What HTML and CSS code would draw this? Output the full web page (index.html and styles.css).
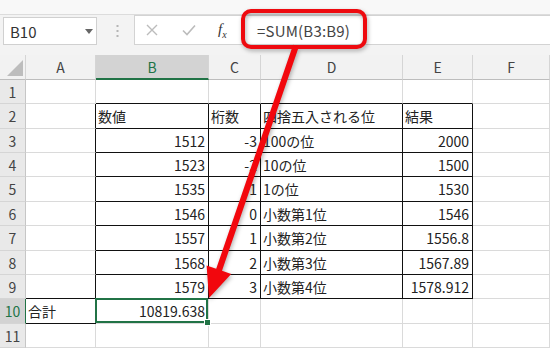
FILE: index.html
```html
<!DOCTYPE html>
<html lang="ja">
<head>
  <meta charset="UTF-8" />
  <title>SUM</title>
  <link rel="stylesheet" href="styles.css">
</head>
<body>
  <div class="ribbon"></div>

  <div class="formula-bar">
    <div class="name-box">
      <span>B10</span>
      <svg class="caret" width="8" height="5" viewBox="0 0 8 5"><path d="M0 0h8L4 5z" fill="#666"/></svg>
    </div>
    <svg class="grip" width="3" height="12" viewBox="0 0 3 12">
      <rect x="0.5" y="0" width="2" height="2" fill="#b5b5b5"/>
      <rect x="0.5" y="5" width="2" height="2" fill="#b5b5b5"/>
      <rect x="0.5" y="10" width="2" height="2" fill="#b5b5b5"/>
    </svg>
    <div class="formula-input">
      <div class="fx-buttons">
        <svg class="btn" width="12" height="12" viewBox="0 0 12 12"><path d="M1 1l10 10M11 1L1 11" stroke="#bcbcbc" stroke-width="1.4" fill="none"/></svg>
        <svg class="btn" width="14" height="12" viewBox="0 0 14 12"><path d="M1 6.5l4 4L13 1.5" stroke="#bcbcbc" stroke-width="1.6" fill="none"/></svg>
        <span class="fx">f<sub>x</sub></span>
      </div>
      <div class="formula">=SUM(B3:B9)</div>
    </div>
  </div>

  <table class="sheet">
    <colgroup>
      <col class="w-rh"><col class="w-a"><col class="w-b"><col class="w-c"><col class="w-d"><col class="w-e"><col class="w-f">
    </colgroup>
    <thead>
      <tr>
        <th class="corner"><svg width="16" height="16" viewBox="0 0 16 16"><path d="M16 0V16H0z" fill="#bdbdbd"/></svg></th>
        <th>A</th>
        <th class="on">B</th>
        <th>C</th>
        <th>D</th>
        <th>E</th>
        <th>F</th>
      </tr>
    </thead>
    <tbody>
      <tr class="r24"><th class="rh">1</th><td></td><td class="tb"></td><td class="tb"></td><td class="tb"></td><td class="tb"></td><td></td></tr>
      <tr class="r25"><th class="rh">2</th><td class="tr"></td><td class="t">数値</td><td class="t">桁数</td><td class="t">四捨五入される位</td><td class="t">結果</td><td></td></tr>
      <tr class="r24"><th class="rh">3</th><td class="tr"></td><td class="t n">1512</td><td class="t n">-3</td><td class="t">100の位</td><td class="t n">2000</td><td></td></tr>
      <tr class="r24"><th class="rh">4</th><td class="tr"></td><td class="t n">1523</td><td class="t n">-2</td><td class="t">10の位</td><td class="t n">1500</td><td></td></tr>
      <tr class="r25"><th class="rh">5</th><td class="tr"></td><td class="t n">1535</td><td class="t n">-1</td><td class="t">1の位</td><td class="t n">1530</td><td></td></tr>
      <tr class="r24"><th class="rh">6</th><td class="tr"></td><td class="t n">1546</td><td class="t n">0</td><td class="t">小数第1位</td><td class="t n">1546</td><td></td></tr>
      <tr class="r25"><th class="rh">7</th><td class="tr"></td><td class="t n">1557</td><td class="t n">1</td><td class="t">小数第2位</td><td class="t n">1556.8</td><td></td></tr>
      <tr class="r24"><th class="rh">8</th><td class="tr"></td><td class="t n">1568</td><td class="t n">2</td><td class="t">小数第3位</td><td class="t n">1567.89</td><td></td></tr>
      <tr class="r24"><th class="rh">9</th><td class="tr tb"></td><td class="t n">1579</td><td class="t n">3</td><td class="t">小数第4位</td><td class="t n">1578.912</td><td></td></tr>
      <tr class="r25"><th class="rh on">10</th><td class="t">合計</td><td class="n active">10819.638</td><td></td><td></td><td></td><td></td></tr>
      <tr class="r24"><th class="rh">11</th><td></td><td></td><td></td><td></td><td></td><td></td></tr>
    </tbody>
  </table>

  <!-- callout drawn over the screenshot -->
  <svg class="callout" width="550" height="350" viewBox="0 0 550 350">
    <rect x="243" y="11" width="122" height="36" rx="8" fill="none" stroke="#ee0a0f" stroke-width="4"/>
    <path d="M298.9 46.6L293.1 44.7L216.2 268.8L206.6 265.4L209 298L231.2 274L222 270.7Z" fill="#f2070d"/>
  </svg>
</body>
</html>
```

FILE: styles.css
```css
body {
  margin: 0;
  width: 550px;
  height: 350px;
  overflow: hidden;
  position: relative;
  background: #fff;
  font-family: "Noto Sans CJK JP", "Noto Sans", sans-serif;
  color: #222;
}

.ribbon {
  height: 14px;
  background: #f8f8f8;
  border-bottom: 1px solid #dcdcdc;
}

.formula-bar {
  height: 40px;
  background: #f3f3f3;
  display: flex;
  align-items: flex-start;
}
.name-box {
  box-sizing: border-box;
  margin: 2px 0 0 3px;
  width: 94px;
  height: 28px;
  background: #fff;
  border: 1px solid #d0d0d0;
  display: flex;
  align-items: center;
  justify-content: space-between;
  padding: 0 3px 0 6px;
  font-size: 15px;
  color: #333;
}
.grip {
  margin: 10px 15px 0 19px;
}
.formula-input {
  flex: 1;
  box-sizing: border-box;
  height: 30px;
  background: #fff;
  border: 1px solid #d3d3d3;
  border-right: none;
  display: flex;
  align-items: center;
}
.fx-buttons {
  width: 105px;
  display: flex;
  align-items: center;
  padding-left: 11px;
  gap: 24px;
}
.fx {
  font-family: "Liberation Serif", serif;
  font-style: italic;
  font-size: 15px;
  color: #333;
  margin-left: -2px;
}
.fx sub {
  font-size: 10px;
}
.formula {
  padding-left: 6px;
  font-size: 15px;
  color: #444;
  letter-spacing: 0.2px;
}

.sheet {
  border-collapse: separate;
  border-spacing: 0;
  table-layout: fixed;
  width: 550px;
  font-size: 14px;
}
.w-rh { width: 26px; }
.w-a { width: 70px; }
.w-b { width: 113px; }
.w-c { width: 52px; }
.w-d { width: 142px; }
.w-e { width: 70px; }
.w-f { width: 77px; }

.sheet thead tr {
  height: 25px;
}
.sheet thead th {
  background: #f2f2f2;
  border-right: 1px solid #d5d5d5;
  border-bottom: 1px solid #bdbdbd;
  font-weight: normal;
  color: #444;
  padding: 0;
  line-height: 20px;
}
.sheet thead th.on {
  background: #d3d3d3;
  color: #217346;
  border-bottom: 2px solid #217346;
}
.sheet .corner {
  text-align: right;
  vertical-align: bottom;
}
.corner svg {
  display: block;
  margin: 0 2px 3px auto;
}

.r24 { height: 24px; }
.r25 { height: 25px; }

.rh {
  background: #e9e9e9;
  border-right: 1px solid #c6c6c6;
  border-bottom: 1px solid #d5d5d5;
  font-weight: normal;
  color: #444;
  padding: 0;
  line-height: 20px;
}
.rh.on {
  background: #d3d3d3;
  color: #217346;
  border-right: 1px solid #217346;
}

td {
  border-right: 1px solid #dadada;
  border-bottom: 1px solid #dadada;
  padding: 0 3px 0 2px;
  line-height: 20px;
  white-space: nowrap;
  overflow: hidden;
}
td.n {
  text-align: right;
}
td.t {
  border-right-color: #111;
  border-bottom-color: #111;
}
td.tb {
  border-bottom-color: #111;
}
td.tr {
  border-right-color: #111;
}

td.active {
  position: relative;
  overflow: visible;
}
td.active::after {
  content: "";
  position: absolute;
  left: -1px;
  top: -1px;
  right: 0;
  bottom: 0;
  border: 2px solid #217346;
}
td.active::before {
  content: "";
  position: absolute;
  right: -3px;
  bottom: -3px;
  width: 5px;
  height: 5px;
  background: #217346;
  border: 1px solid #fff;
  z-index: 2;
}

.callout {
  position: absolute;
  left: 0;
  top: 0;
  pointer-events: none;
  filter: drop-shadow(1px 2px 2px rgba(0, 0, 0, 0.3));
}
```
